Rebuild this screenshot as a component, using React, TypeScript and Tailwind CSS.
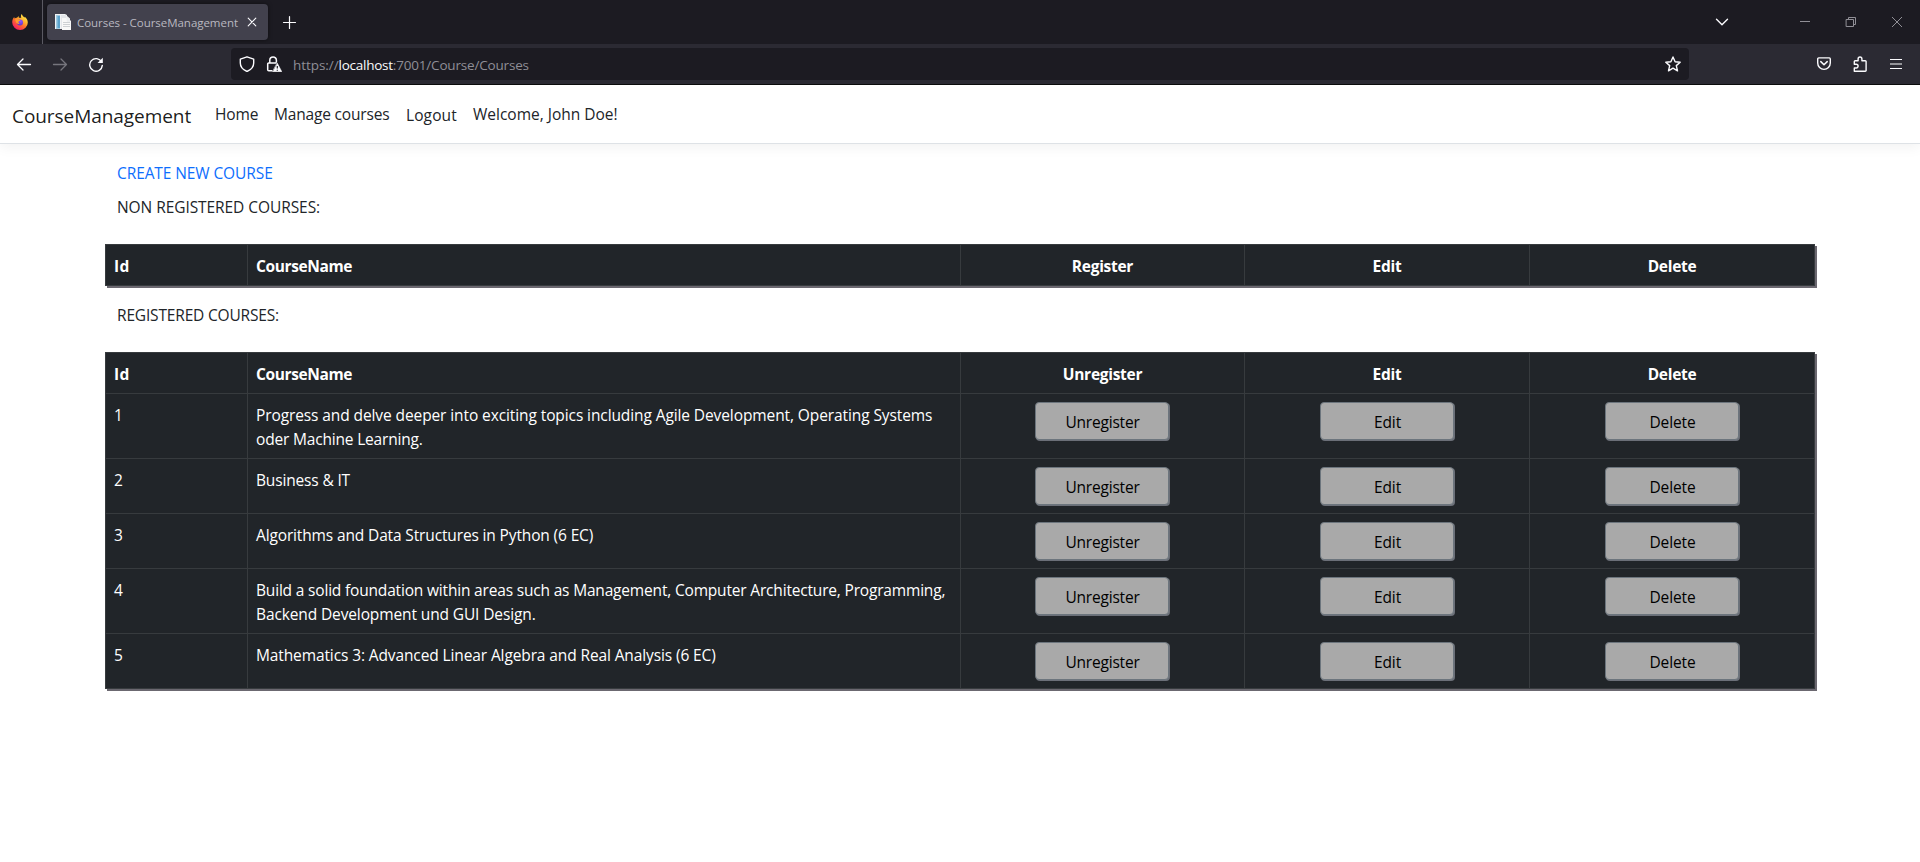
import type { ReactNode } from "react";

type Course = { id: number; lines: { text: string; spacing: string }[]; height: string };

const courses: Course[] = [
  {
    id: 1,
    height: "h-[65px]",
    lines: [
      {
        text: "Progress and delve deeper into exciting topics including Agile Development, Operating Systems",
        spacing: "tracking-[-0.1px]",
      },
      { text: "oder Machine Learning.", spacing: "tracking-[-0.18px]" },
    ],
  },
  { id: 2, height: "h-[55px]", lines: [{ text: "Business & IT", spacing: "tracking-[-0.16px]" }] },
  {
    id: 3,
    height: "h-[55px]",
    lines: [{ text: "Algorithms and Data Structures in Python (6 EC)", spacing: "tracking-[-0.14px]" }],
  },
  {
    id: 4,
    height: "h-[65px]",
    lines: [
      {
        text: "Build a solid foundation within areas such as Management, Computer Architecture, Programming,",
        spacing: "tracking-[-0.18px]",
      },
      { text: "Backend Development und GUI Design.", spacing: "tracking-[-0.12px]" },
    ],
  },
  {
    id: 5,
    height: "h-[55px]",
    lines: [
      { text: "Mathematics 3: Advanced Linear Algebra and Real Analysis (6 EC)", spacing: "tracking-[-0.115px]" },
    ],
  },
];

function Icon({ children, className = "" }: { children: ReactNode; className?: string }) {
  return (
    <svg
      viewBox="0 0 16 16"
      className={`block size-4 shrink-0 ${className}`}
      fill="none"
      stroke="currentColor"
      strokeWidth="1.3"
      strokeLinecap="round"
      strokeLinejoin="round"
    >
      {children}
    </svg>
  );
}

function FirefoxLogo() {
  return (
    <svg viewBox="0 0 16 16" className="block size-4">
      <defs>
        <linearGradient id="fx-flame" x1="0.85" y1="0.05" x2="0.2" y2="0.95">
          <stop offset="0" stopColor="#fff44f" />
          <stop offset="0.35" stopColor="#ffb22e" />
          <stop offset="0.6" stopColor="#ff6a2b" />
          <stop offset="1" stopColor="#f5156c" />
        </linearGradient>
        <radialGradient id="fx-globe" cx="0.6" cy="0.3" r="0.8">
          <stop offset="0" stopColor="#9059ff" />
          <stop offset="1" stopColor="#5b2fc0" />
        </radialGradient>
      </defs>
      <path
        d="M9.800 0c.3 1.600 1.600 2.600 2.600 3.600.3-.1.4-.5.4-.9 1.800 1.500 3 3.400 3 5.700A7.700 7.600 0 0 1 8.100 16 7.800 7.700 0 0 1 .2 8.300C.2 6.200 1 4.500 2.300 3.100c0 .6.100 1 .3 1.300.7-.5 1.500-.7 2.400-.6C5.600 3 6.300 2.600 7.200 2.300c-.4.6-.5 1.100-.4 1.500 1-.1 1.800-.1 2.500.2C8.600 2.600 8.800 1.100 9.800 0z"
        fill="url(#fx-flame)"
      />
      <circle cx="8" cy="8.400" r="3" fill="url(#fx-globe)" />
      <path d="M3.200 5.300c1.200-.5 2.500-.2 3.400.6l1.700.2c-.2 1-1.300 1.100-1.800 1.700-.2.700.2 1.500 1 1.900-2 .8-4-.4-4.300-4.400z" fill="#ff9a2e" />
    </svg>
  );
}

function DocumentsIcon() {
  return (
    <svg viewBox="0 0 16 16" className="block size-4">
      <path d="M0 0h10l2 1v14H0z" fill="#f1f3f5" />
      <path d="M1 1.500h4v13H1z" fill="#5ba3cd" />
      <path d="M1 1.500h1.500v13H1z" fill="#9fcbe3" />
      <path d="M6 1h5v14H6z" fill="#e4e6ea" />
      <path d="M7 4h6l3 3v9H7z" fill="#f8f8f8" />
      <path d="M11 1l4 3.500V8h-3z" fill="#eceef0" />
      <path d="M8 8.500h7M8 10.500h7M8 12.500h7" stroke="#c3c6ca" strokeWidth="0.8" />
    </svg>
  );
}

function TabBar() {
  return (
    <div className="flex h-11 items-center bg-[#1c1b22] text-[#fbfbfe]">
      <div className="flex h-11 w-[43px] items-center border-r border-[#5b5a63] pl-3">
        <FirefoxLogo />
      </div>
      <div className="ml-1 flex h-9 w-[221px] items-center rounded bg-[#42414d] pl-2 shadow-[0_0_4px_rgba(0,0,0,0.5)]">
        <DocumentsIcon />
        <span className="ml-1.5 w-[167px] whitespace-nowrap pt-px text-[11.5px] leading-4 tracking-[-0.04px] text-[#b9b8c0]">
          Courses - CourseManagement
        </span>
        <Icon>
          <path d="M4.200 4.200l7.600 7.600M11.800 4.200l-7.600 7.600" strokeWidth="1.100" />
        </Icon>
      </div>
      <Icon className="ml-[13px]">
        <path d="M8.500 2.500v12M2.500 8.500h12" strokeWidth="1.200" />
      </Icon>
      <div className="ml-auto flex items-center">
        <Icon className="mr-[67px]">
          <path d="M2.500 5.200L8 10.700l5.500-5.500" strokeWidth="1.400" />
        </Icon>
        <div className="mr-[15px] flex items-center gap-[30px] text-[#908f96]">
          <Icon>
            <path d="M3 7.500h10" strokeWidth="1" strokeLinecap="butt" />
          </Icon>
          <Icon>
            <path d="M3.500 5.500h7v7h-7zM5.500 5.500v-2h7v7h-2" strokeWidth="1" />
          </Icon>
          <Icon>
            <path d="M3 3l10 10M13 3L3 13" strokeWidth="1" strokeLinecap="butt" />
          </Icon>
        </div>
      </div>
    </div>
  );
}

function Toolbar() {
  return (
    <div className="flex h-[41px] items-center border-b border-[#0c0c0d] bg-[#2b2a33] text-[#fbfbfe]">
      <div className="flex w-[231px] items-center gap-5 pl-4">
        <Icon>
          <path d="M14.500 8.500H1.500M7 3L1.500 8.500 7 14" />
        </Icon>
        <Icon className="text-[#76757d]">
          <path d="M1.500 8.500h13M9 3l5.500 5.500L9 14" />
        </Icon>
        <Icon>
          <path d="M13.600 6A6.300 6.300 0 1 0 14.300 9.400" strokeWidth="1.400" />
          <path d="M14.800 1.800v5.200H9.600z" fill="currentColor" stroke="none" />
        </Icon>
      </div>
      <div className="flex h-8 w-[1458px] items-center rounded bg-[#1c1b22] px-2">
        <Icon>
          <path d="M8 .8l6.700 2.400v3.900c0 3.900-2.800 6.800-6.700 8.400-3.900-1.600-6.700-4.500-6.700-8.400V3.200z" strokeWidth="1.400" />
        </Icon>
        <Icon className="ml-[11px]">
          <path d="M3.800 7V4.200a3.300 3.300 0 0 1 6.600 0V6M5.800 14.800H2.700a1 1 0 0 1-1-1V8a1 1 0 0 1 1-1h7" strokeWidth="1.500" />
          <path d="M11.300 7.200l4.500 8.500H6.800z" fill="currentColor" stroke="currentColor" strokeWidth="0.600" />
          <path d="M11.300 10v2.600M11.300 13.800v.9" stroke="#1c1b22" strokeWidth="1.200" strokeLinecap="butt" />
        </Icon>
        <span className="ml-[11px] whitespace-nowrap pt-0.5 text-[13.5px] leading-5 text-[#8f8e96]">
          <span className="tracking-[-0.06px]">https://</span>
          <span className="tracking-[-0.26px] text-[#fbfbfe]">localhost</span>
          <span className="tracking-[-0.18px]">:7001/Course/Courses</span>
        </span>
        <Icon className="ml-auto">
          <path d="M8 1l2.100 4.700 5.100.5-3.900 3.400 1.200 5.200L8 12.100l-4.500 2.700 1.200-5.200L.8 6.200l5.100-.5z" strokeWidth="1.400" />
        </Icon>
      </div>
      <div className="ml-auto mr-4 flex items-center gap-5">
        <Icon>
          <path d="M2.700 1.900h10.600a1 1 0 0 1 1 1v4.200a6.300 6.300 0 0 1-12.600 0V2.900a1 1 0 0 1 1-1z" strokeWidth="1.400" />
          <path d="M4.800 5.600L8 8.700l3.200-3.100" strokeWidth="1.500" />
        </Icon>
        <Icon className="mr-px">
          <path
            d="M2.300 15.200V12H4.200a1.700 1.700 0 0 0 0-3.800H2.300V5.600a.8.8 0 0 1 .8-.8h3V2.900a1.900 1.900 0 0 1 3.800 0v1.900h3.400a.8.8 0 0 1 .8.8v8.800a.8.8 0 0 1-.8.8z"
            strokeWidth="1.400"
          />
        </Icon>
        <Icon className="-ml-px">
          <path d="M2 3.500h12M2 8h12M2 12.500h12" strokeWidth="1.200" strokeLinecap="butt" />
        </Icon>
      </div>
    </div>
  );
}

function SiteNav() {
  return (
    <nav className="flex h-[59px] items-center whitespace-nowrap border-b border-[#dee2e6] bg-white pl-3 shadow-[0_4px_12px_rgba(0,0,0,0.05)]">
      <a className="w-[203px] pt-1 text-[19px] leading-[30px] tracking-[-0.06px] text-black/90">CourseManagement</a>
      <a className="w-[59px] tracking-[-0.1px]">Home</a>
      <a className="w-[132px] tracking-[-0.18px]">Manage courses</a>
      <a className="w-[67px] pt-0.5 tracking-[0.1px]">Logout</a>
      <a>Welcome, John Doe!</a>
    </nav>
  );
}

const cell = "border-b border-r border-[#373b3e] px-2 pb-0 align-top";

function CourseTable({ action, rows }: { action: string; rows: Course[] }) {
  return (
    <table className="w-[1710px] table-fixed border-separate border-spacing-0 border-l border-t border-[#373b3e] bg-[#212529] text-white shadow-[2px_2px_0_#6b6870]">
      <colgroup>
        <col className="w-[142px]" />
        <col className="w-[713px]" />
        <col className="w-[284px]" />
        <col className="w-[285px]" />
        <col className="w-[285px]" />
      </colgroup>
      <thead>
        <tr className="h-[41px] font-bold">
          <th className={`${cell} pt-[9px] text-left tracking-[0.3px]`}>Id</th>
          <th className={`${cell} pt-[9px] text-left tracking-[-0.38px]`}>CourseName</th>
          <th className={`${cell} pt-[9px] text-center tracking-[-0.28px]`}>{action}</th>
          <th className={`${cell} pt-[9px] text-center tracking-[-0.28px]`}>Edit</th>
          <th className={`${cell} pt-[9px] text-center tracking-[-0.28px]`}>Delete</th>
        </tr>
      </thead>
      <tbody>
        {rows.map((course) => (
          <tr key={course.id} className={course.height}>
            <td className={`${cell} pt-[9px]`}>{course.id}</td>
            <td className={`${cell} whitespace-nowrap pt-[9px]`}>
              {course.lines.map((line) => (
                <div key={line.text} className={line.spacing}>
                  {line.text}
                </div>
              ))}
            </td>
            <td className="border-b border-r border-[#373b3e] pb-0 pl-2 pr-[9px] pt-2 align-top">
              <ActionButton spacing="tracking-[-0.2px]">{action}</ActionButton>
            </td>
            <td className={`${cell} pt-2`}>
              <ActionButton spacing="tracking-[-0.1px]">Edit</ActionButton>
            </td>
            <td className={`${cell} pt-2`}>
              <ActionButton spacing="tracking-[-0.1px]">Delete</ActionButton>
            </td>
          </tr>
        ))}
      </tbody>
    </table>
  );
}

function ActionButton({ children, spacing }: { children: ReactNode; spacing: string }) {
  return (
    <button
      className={`mx-auto block h-[38px] w-[134px] rounded border border-[#6c757d] bg-[#a9a9a9] pl-px pt-px text-center leading-6 text-black shadow-[1px_1px_0_#6b6f78] ${spacing}`}
    >
      {children}
    </button>
  );
}

export default function App() {
  return (
    <div className="h-[862px] overflow-hidden bg-white font-['Open_Sans','Noto_Sans',sans-serif] text-[15.5px] leading-6 text-[#212529]">
      <TabBar />
      <Toolbar />
      <SiteNav />
      <main className="px-[105px] pt-[17px]">
        <a className="block pl-3 tracking-[-0.1px] text-[#0d6efd]">CREATE NEW COURSE</a>
        <p className="mb-[25px] mt-2.5 pl-3 tracking-[-0.07px]">NON REGISTERED COURSES:</p>
        <CourseTable action="Register" rows={[]} />
        <p className="mb-[25px] mt-[17px] pl-3 tracking-[-0.17px]">REGISTERED COURSES:</p>
        <CourseTable action="Unregister" rows={courses} />
      </main>
    </div>
  );
}
